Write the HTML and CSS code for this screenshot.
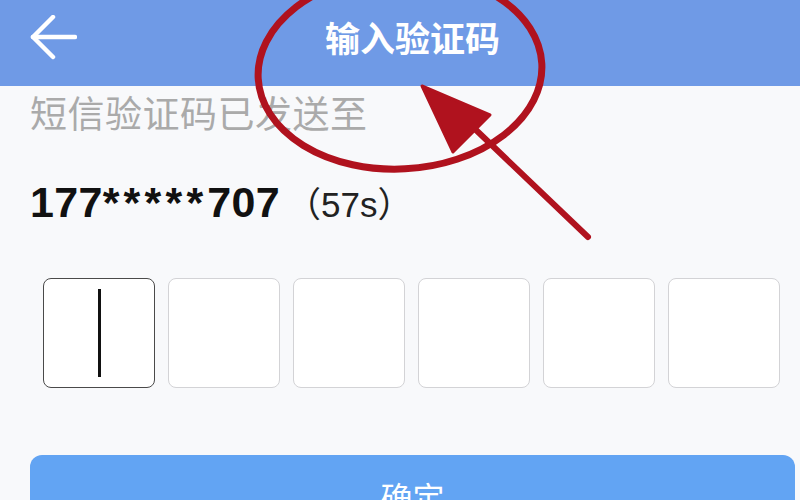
FILE: index.html
```html
<!DOCTYPE html>
<html lang="zh">
<head>
<meta charset="utf-8">
<title>输入验证码</title>
<link rel="stylesheet" href="styles.css">
</head>
<body>
<div class="screen">
  <header class="header">
    <div class="back">
      <svg width="48" height="46" viewBox="0 0 48 46" fill="none" stroke="#ffffff" stroke-width="4.5" stroke-linecap="round" stroke-linejoin="round">
        <path d="M46 22 H4"/>
        <path d="M24 2 L4 22 L24 42"/>
      </svg>
    </div>
    <h1 class="title">输入验证码</h1>
    <div></div>
  </header>
  <main class="content">
    <p class="hint">短信验证码已发送至</p>
    <p class="phone"><span class="number">177<span class="stars">*****</span>707</span><span class="count">（57s）</span></p>
    <div class="codes">
      <div class="box active"><span class="cursor"></span></div>
      <div class="box"></div>
      <div class="box"></div>
      <div class="box"></div>
      <div class="box"></div>
      <div class="box"></div>
    </div>
    <button class="confirm">确定</button>
  </main>
  <svg class="mark" width="825" height="260" viewBox="0 0 825 260" fill="none">
    <ellipse cx="400" cy="71" rx="142" ry="98" transform="rotate(-3 400 71)" stroke="#b0121e" stroke-width="7"/>
    <path d="M476 130 L588 237" stroke="#b0121e" stroke-width="6" stroke-linecap="round"/>
    <path d="M422 86 L490 115 L453 152 Z" fill="#b0121e" stroke="#b0121e" stroke-width="3" stroke-linejoin="round"/>
  </svg>
</div>
</body>
</html>
```
FILE: styles.css
```css
html, body {
  margin: 0;
  padding: 0;
  background: #f8f9fb;
  overflow: hidden;
}
.screen {
  position: relative;
  width: 825px;
  height: 500px;
  overflow: hidden;
  background: #f8f9fb;
  font-family: "Liberation Sans", "Noto Sans CJK SC", sans-serif;
}
.header {
  height: 86px;
  background: #6f9ae6;
  display: grid;
  grid-template-columns: 1fr auto 1fr;
  align-items: center;
}
.back {
  padding-left: 29px;
  display: flex;
  align-items: center;
  height: 46px;
  margin-top: -10px;
}
.title {
  margin: 0;
  margin-top: -12px;
  color: #ffffff;
  font-family: "Noto Sans CJK SC", sans-serif;
  font-weight: 700;
  font-size: 35px;
  line-height: 40px;
}
.content {
  padding: 0 30px;
}
.hint {
  margin: 0;
  padding-top: 1px;
  color: #aaaaaa;
  font-family: "Noto Sans CJK SC", sans-serif;
  font-size: 37px;
  line-height: 50px;
  letter-spacing: 0.5px;
}
.phone {
  margin: 40px 0 0;
  display: flex;
  align-items: baseline;
  height: 50px;
}
.number {
  font-family: "Liberation Sans", sans-serif;
  font-weight: 700;
  font-size: 43px;
  line-height: 50px;
  color: #111111;
  letter-spacing: 0.3px;
}
.stars {
  letter-spacing: 4.2px;
}
.count {
  font-family: "Liberation Sans", "Noto Sans CJK SC", sans-serif;
  font-size: 35px;
  line-height: 50px;
  color: #222222;
  margin-left: 6px;
}
.codes {
  margin-top: 51px;
  margin-left: 13px;
  display: grid;
  grid-template-columns: repeat(6, 112px);
  gap: 13px;
}
.box {
  height: 110px;
  box-sizing: border-box;
  border: 1.5px solid #d3d3d6;
  border-radius: 8px;
  background: #ffffff;
  display: flex;
  align-items: center;
  justify-content: center;
}
.box.active {
  border-color: #4a4a4a;
}
.cursor {
  width: 3px;
  height: 88px;
  background: #111111;
}
.confirm {
  display: block;
  margin-top: 67px;
  width: 765px;
  border: none;
  border-radius: 12px;
  background: #62a4f3;
  color: #ffffff;
  font-family: "Noto Sans CJK SC", sans-serif;
  font-size: 32px;
  padding: 21px 0 30px;
  text-align: center;
  line-height: 40px;
}
.mark {
  position: absolute;
  left: 0;
  top: 0;
  pointer-events: none;
}
```
